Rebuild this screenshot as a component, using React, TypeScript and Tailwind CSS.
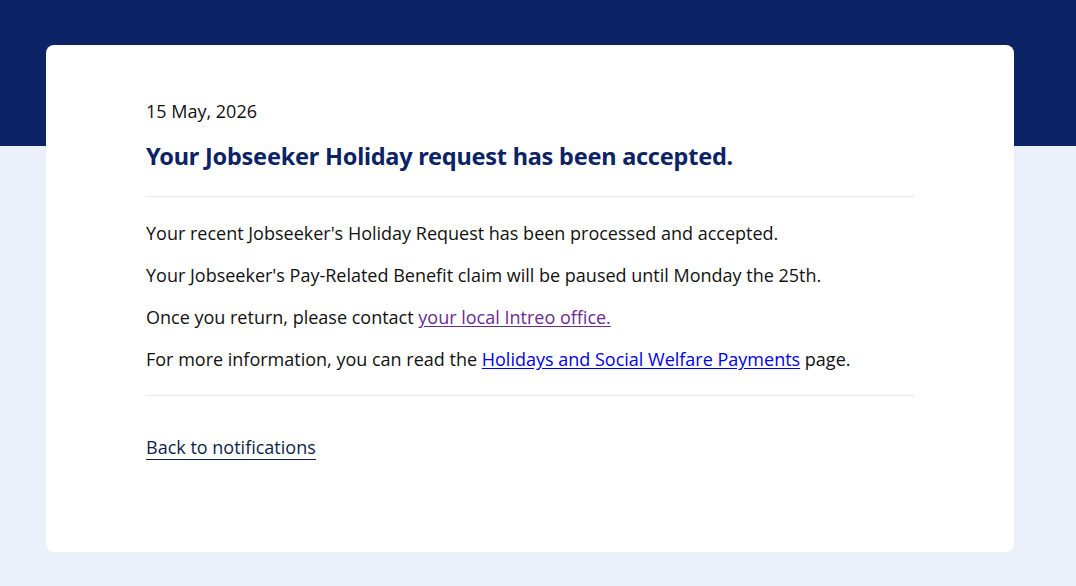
export default function App() {
  return (
    <div className="relative min-h-[586px] bg-[#ecf0fa] font-['Open_Sans',sans-serif]">
      <div className="absolute inset-x-0 top-0 h-[146px] bg-[#0c2366]" />
      <div className="relative pt-[45px] pl-[46px]">
        <div className="h-[507px] w-[968px] rounded-lg bg-white px-[100px] pt-[53px]">
          <p className="text-[18px] leading-[26px] text-[#111]">15 May, 2026</p>
          <h1 className="mt-[17px] font-['Noto_Sans',sans-serif] text-[23.5px] leading-[30px] font-bold tracking-[-0.01em] text-[#0c2366]">
            Your Jobseeker Holiday request has been accepted.
          </h1>
          <hr className="mt-[25px] border-t border-[#e5e5e5]" />
          <div className="flex flex-col gap-[16px] pt-[23px] pb-[23px] text-[18px] leading-[26px] text-[#111]">
            <p>Your recent Jobseeker's Holiday Request has been processed and accepted.</p>
            <p>Your Jobseeker's Pay-Related Benefit claim will be paused until Monday the 25th.</p>
            <p>
              Once you return, please contact{' '}
              <a href="#" className="text-[#6a2c91] underline underline-offset-2">
                your local Intreo office.
              </a>
            </p>
            <p>
              For more information, you can read the{' '}
              <a href="#" className="text-[#0000ee] underline underline-offset-2">
                Holidays and Social Welfare Payments
              </a>{' '}
              page.
            </p>
          </div>
          <hr className="border-t border-[#e5e5e5]" />
          <a
            href="#"
            className="mt-[39px] inline-block border-b border-[#0c1f4d] text-[18px] leading-[24px] text-[#0c1f4d]"
          >
            Back to notifications
          </a>
        </div>
      </div>
    </div>
  );
}
